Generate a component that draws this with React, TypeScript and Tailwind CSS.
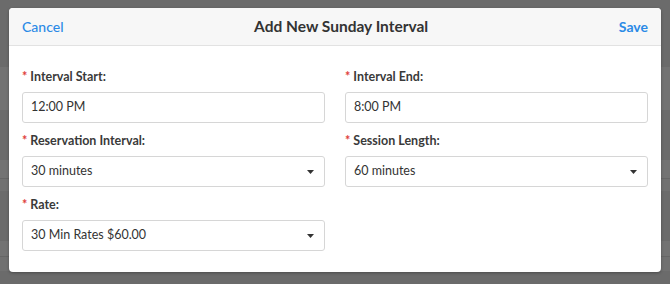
import { ReactNode } from "react";

function Field({ label, children }: { label: string; children: ReactNode }) {
  return (
    <div className="flex flex-col">
      <label className="mb-[7px] h-4 text-[12.5px] font-bold leading-4 text-[#3a3a3a]">
        <span className="mr-[3px] text-[#e0403a]">*</span>
        {label}
      </label>
      {children}
    </div>
  );
}

function TextInput({ value }: { value: string }) {
  return (
    <div className="flex h-[31px] items-center rounded-[3px] border border-[#d6d6d6] bg-white px-2 text-[12.5px] text-[#333]">
      {value}
    </div>
  );
}

function Select({ value }: { value: string }) {
  return (
    <div className="flex h-[31px] items-center justify-between rounded-[3px] border border-[#d6d6d6] bg-white pl-2 pr-[10px] text-[12.5px] text-[#333]">
      <span>{value}</span>
      <svg width="7" height="4" viewBox="0 0 7 4" className="mt-px">
        <path d="M0 0h7L3.5 4z" fill="#333" />
      </svg>
    </div>
  );
}

export default function App() {
  return (
    <div
      className="relative h-[284px] w-[670px] overflow-hidden bg-[#6b6b6b]"
      style={{ fontFamily: "Lato, 'Open Sans', sans-serif" }}
    >
      {/* table rows showing behind the overlay */}
      <div className="absolute inset-0 flex flex-col">
        <div className="h-[67px]" />
        <div className="h-[43px] bg-[#737373]" />
        <div className="h-[50px]" />
        <div className="h-[18px] bg-[#737373]" />
        <div className="h-px bg-[#666]" />
        <div className="h-[12px] bg-[#717171]" />
        <div className="h-[50px]" />
        <div className="h-[15px] bg-[#737373]" />
        <div className="h-px bg-[#666]" />
        <div className="h-[14px] bg-[#717171]" />
      </div>

      <div className="relative px-[9px] pt-2">
        <div className="h-[264px] overflow-hidden rounded-[4px] bg-white shadow-[0_1px_3px_rgba(0,0,0,0.3)]">
          <div className="flex h-[38px] items-center justify-between border-b border-[#e2e2e2] bg-[#f7f7f7] px-[13px]">
            <button className="text-[14px] font-medium text-[#2b8ae6]">Cancel</button>
            <h3 className="text-[15.5px] font-bold text-[#333]">Add New Sunday Interval</h3>
            <button className="text-[14px] font-bold text-[#2b8ae6]">Save</button>
          </div>

          <div className="grid grid-cols-2 gap-x-5 gap-y-[10px] px-[13px] pt-[23px]">
            <Field label="Interval Start:">
              <TextInput value="12:00 PM" />
            </Field>
            <Field label="Interval End:">
              <TextInput value="8:00 PM" />
            </Field>
            <Field label="Reservation Interval:">
              <Select value="30 minutes" />
            </Field>
            <Field label="Session Length:">
              <Select value="60 minutes" />
            </Field>
            <Field label="Rate:">
              <Select value="30 Min Rates $60.00" />
            </Field>
          </div>
        </div>
      </div>
    </div>
  );
}
